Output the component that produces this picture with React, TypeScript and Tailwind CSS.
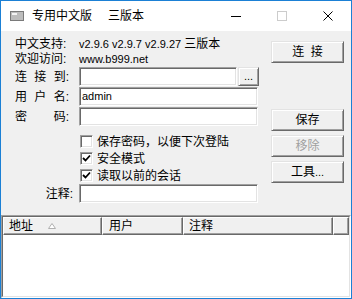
import React from 'react';

const raised =
  'border border-t-[#e3e3e3] border-l-[#e3e3e3] border-r-[#696969] border-b-[#696969] bg-[#f0f0f0] shadow-[inset_1px_1px_#ffffff,inset_-1px_-1px_#a0a0a0]';
const sunken =
  'border border-t-[#a0a0a0] border-l-[#a0a0a0] border-r-white border-b-white bg-white shadow-[inset_1px_1px_#696969,inset_-1px_-1px_#e3e3e3]';

function Latin({ children }: { children: React.ReactNode }) {
  return <span className="text-[11px]">{children}</span>;
}

function SpacedLabel({ chars }: { chars: string[] }) {
  return (
    <div className="w-[54px] flex justify-between">
      {chars.map((c, i) => (
        <span key={i}>{c}</span>
      ))}
    </div>
  );
}

function Field({ value }: { value?: string }) {
  return (
    <div className={`${sunken} w-[179px] h-[19px] flex items-center pl-[2px]`}>
      {value && <span className="text-[11px] leading-none">{value}</span>}
    </div>
  );
}

function Check({ checked, label }: { checked?: boolean; label: string }) {
  return (
    <div className="h-[17px] flex items-center">
      <div className={`${sunken} ml-[1px] w-[13px] h-[13px] flex items-center justify-center`}>
        {checked && (
          <svg width="9" height="9" viewBox="0 0 9 9">
            <path d="M1 4 L3.5 6.5 L8 1.5" fill="none" stroke="#000" strokeWidth="1.8" />
          </svg>
        )}
      </div>
      <span className="ml-[4px]">{label}</span>
    </div>
  );
}

function Btn({ children, disabled, className = '' }: { children: React.ReactNode; disabled?: boolean; className?: string }) {
  return (
    <div
      className={`${raised} h-[22px] flex items-center justify-center ${disabled ? 'text-[#a0a0a0]' : 'text-black'} ${className}`}
    >
      {children}
    </div>
  );
}

function HeaderCell({ children, className = '' }: { children?: React.ReactNode; className?: string }) {
  return (
    <div
      className={`h-full flex items-center pl-[5px] border-t border-l border-t-white border-l-white border-b border-r border-b-[#696969] border-r-[#696969] shadow-[inset_-1px_-1px_#a0a0a0] ${className}`}
    >
      {children}
    </div>
  );
}

export default function App() {
  return (
    <div className="w-[352px] h-[299px] border border-[#1b80d5] flex flex-col font-['Liberation_Sans','Noto_Sans_CJK_SC',sans-serif] text-[12px] leading-[14px] text-black overflow-hidden">
      {/* title bar */}
      <div className="h-[30px] bg-white flex items-center shrink-0">
        <svg className="ml-[9px]" width="14" height="10" viewBox="0 0 14 10">
          <rect x="0" y="0" width="14" height="10" fill="#7a7a7a" />
          <rect x="1" y="1" width="12" height="8" fill="#bdbdbd" />
          <rect x="2" y="2" width="5" height="2" fill="#f4f4f4" />
        </svg>
        <span className="ml-[8px]">专用中文版</span>
        <span className="ml-[16px]">三版本</span>
        <div className="ml-auto flex h-full">
          <div className="w-[46px] h-full flex items-center justify-center">
            <div className="w-[10px] h-px bg-black" />
          </div>
          <div className="w-[46px] h-full flex items-center justify-center">
            <div className="w-[10px] h-[10px] border border-[#cccccc]" />
          </div>
          <div className="w-[46px] h-full flex items-center justify-center">
            <svg width="10" height="10" viewBox="0 0 10 10">
              <path d="M0.5 0.5 L9.5 9.5 M9.5 0.5 L0.5 9.5" stroke="#000" strokeWidth="1" />
            </svg>
          </div>
        </div>
      </div>

      {/* body */}
      <div className="flex-1 bg-[#f0f0f0] flex flex-col">
        <div className="flex">
          <div className="pl-[14px] pt-[5px] flex flex-col">
            <div className="h-[15px] flex items-center">
              <span className="w-[64px]">中文支持:</span>
              <span>
                <Latin>v2.9.6 v2.9.7 v2.9.27 </Latin>三版本
              </span>
            </div>
            <div className="h-[15px] flex items-center">
              <span className="w-[64px]">欢迎访问:</span>
              <Latin>www.b999.net</Latin>
            </div>
            <div className="mt-[1px] flex flex-col gap-[1px]">
              <div className="flex items-center">
                <div className="w-[64px]">
                  <SpacedLabel chars={['连', '接', '到:']} />
                </div>
                <div className={`${sunken} w-[158px] h-[19px]`} />
                <div className={`${raised} ml-[1px] w-[21px] h-[19px] flex items-end justify-center pb-[3px]`}>
                  <span className="text-[11px] leading-none">...</span>
                </div>
              </div>
              <div className="flex items-center">
                <div className="w-[64px]">
                  <SpacedLabel chars={['用', '户', '名:']} />
                </div>
                <Field value="admin" />
              </div>
              <div className="flex items-center">
                <div className="w-[64px]">
                  <SpacedLabel chars={['密', '码:']} />
                </div>
                <Field />
              </div>
            </div>
            <div className="mt-[7px] pl-[64px] flex flex-col">
              <Check label="保存密码，以便下次登陆" />
              <Check checked label="安全模式" />
              <Check checked label="读取以前的会话" />
            </div>
            <div className="flex items-center">
              <div className="w-[64px] flex justify-end pr-[6px]">注释:</div>
              <Field />
            </div>
          </div>

          <div className="ml-auto mr-[7px] pt-[10px] w-[73px] flex flex-col">
            <Btn>连&nbsp;&nbsp;接</Btn>
            <Btn className="mt-[46px]">保存</Btn>
            <Btn disabled className="mt-[4px]">
              移除
            </Btn>
            <Btn className="mt-[4px]">
              工具<Latin>...</Latin>
            </Btn>
          </div>
        </div>

        {/* list view */}
        <div className="mt-[12px] flex-1 flex flex-col border border-t-[#a0a0a0] border-l-[#a0a0a0] border-r-white border-b-white">
          <div className="flex-1 flex flex-col border border-t-[#696969] border-l-[#696969] border-r-[#e3e3e3] border-b-[#e3e3e3] bg-white">
            <div className="h-[18px] flex bg-[#f0f0f0] shrink-0">
              <HeaderCell className="w-[99px]">
                <span>地址</span>
                <svg className="ml-[15px]" width="8" height="6" viewBox="0 0 8 6">
                  <path d="M4 0.5 L7.5 5.5 L0.5 5.5 Z" fill="#ffffff" stroke="#b0b0b0" strokeWidth="1" />
                </svg>
              </HeaderCell>
              <HeaderCell className="w-[81px]">
                <span className="ml-[1px]">用户</span>
              </HeaderCell>
              <HeaderCell className="w-[150px]">
                <span>注释</span>
              </HeaderCell>
              <HeaderCell className="flex-1" />
            </div>
            <div className="flex-1 bg-white" />
          </div>
        </div>
      </div>
    </div>
  );
}
